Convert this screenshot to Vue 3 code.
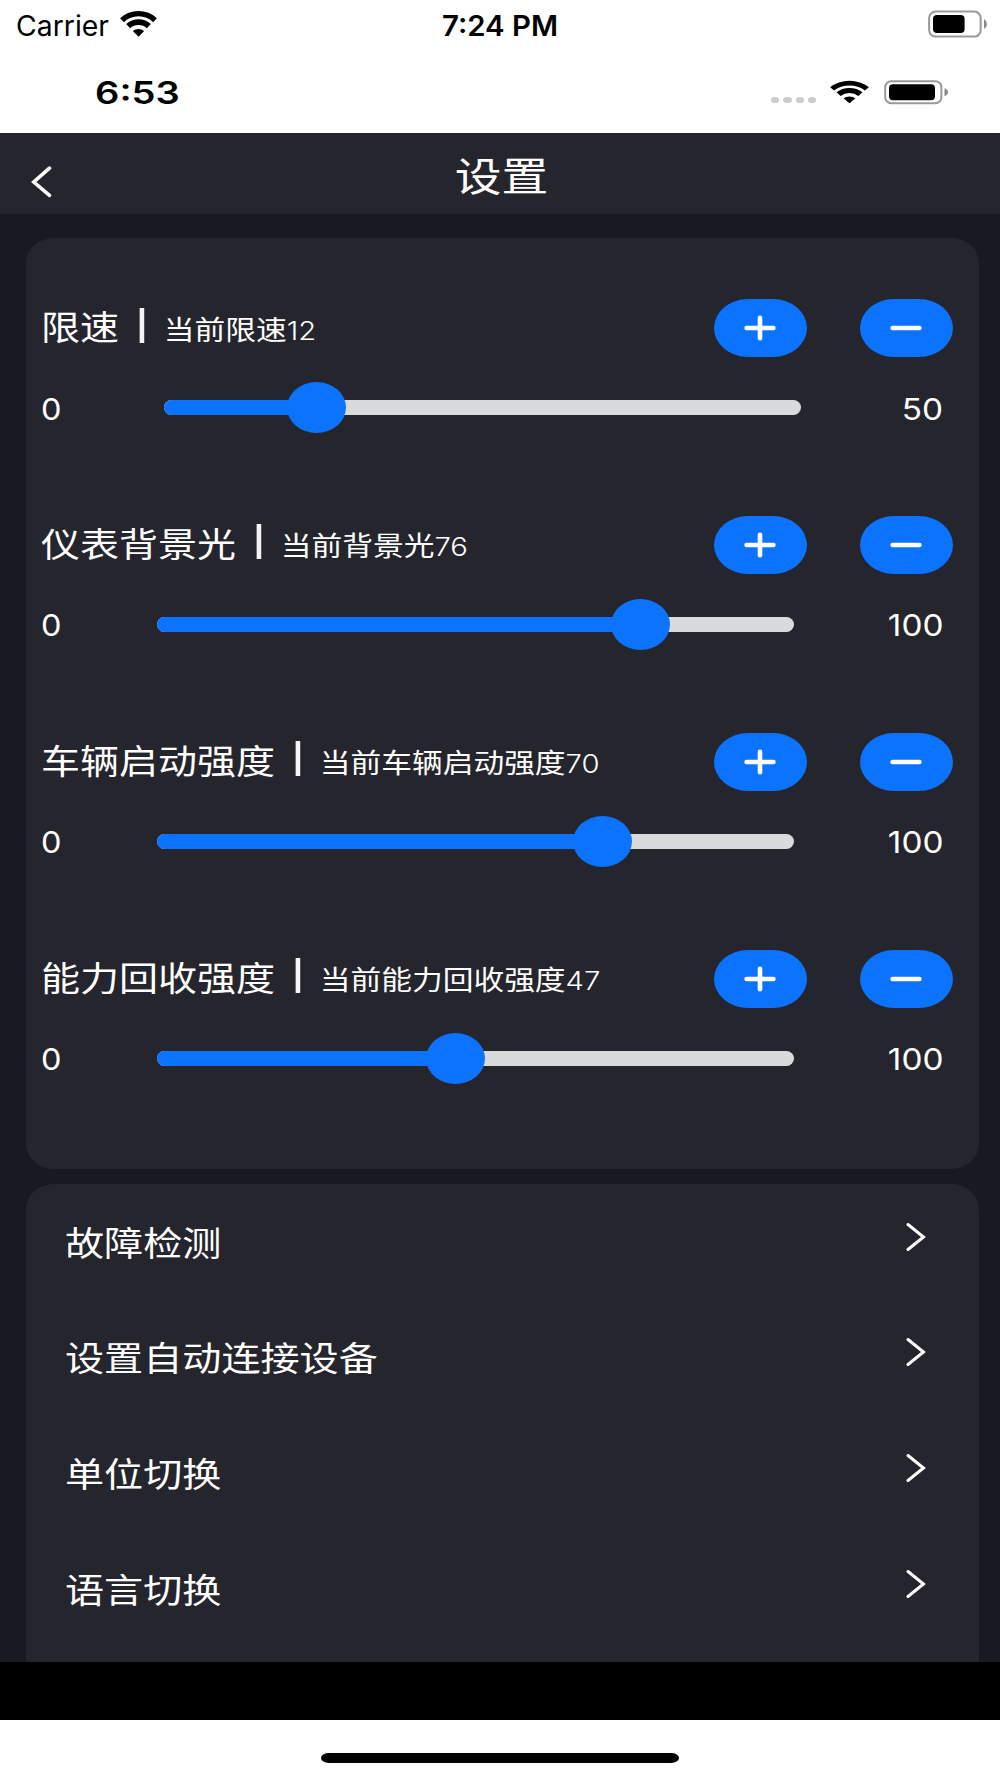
<script setup>
const sliders = [
  { label: '限速', current: '当前限速', value: 12, max: 50 },
  { label: '仪表背景光', current: '当前背景光', value: 76, max: 100 },
  { label: '车辆启动强度', current: '当前车辆启动强度', value: 70, max: 100 },
  { label: '能力回收强度', current: '当前能力回收强度', value: 47, max: 100 },
]
const links = ['故障检测', '设置自动连接设备', '单位切换', '语言切换']
const wifi =
  'M.1 8.3A26 26 0 0 1 36.4 8.3L32.65 12.2A20.5 20.5 0 0 0 3.85 12.2ZM6.1 14.1A17.5 17.5 0 0 1 30.4 14.1L26.5 18.3A12 12 0 0 0 10 18.3ZM12.7 21.1A8.2 8.2 0 0 1 23.8 21.1L18.25 26.8Z'
</script>

<template>
  <div class="screen">
    <div class="status device">
      <span class="carrier">Carrier</span>
      <svg class="wifi" viewBox="0 0 36.5 27" preserveAspectRatio="none"><path :d="wifi" /></svg>
      <span class="clock">7:24 PM</span>
      <svg class="battery" width="60" height="28" viewBox="0 0 60 28">
        <rect x="1.1" y="1.6" width="51.6" height="25" rx="6.5" fill="none" stroke="#999" stroke-width="2" />
        <rect x="5" y="5" width="31.6" height="18" rx="4" />
        <path d="M56 9Q59 11 59 14Q59 17 56 19Z" fill="#8a8a8a" />
      </svg>
    </div>
    <div class="status inner">
      <span class="time">6:53</span>
      <div class="dots"><i v-for="n in 4" :key="n"></i></div>
      <svg class="wifi wide" viewBox="0 0 36.5 27" preserveAspectRatio="none"><path :d="wifi" /></svg>
      <svg class="battery" width="65" height="25" viewBox="0 0 65 25">
        <rect x="1.2" y="1.2" width="56.2" height="22" rx="6" fill="none" stroke="#999" stroke-width="2" />
        <rect x="5" y="4.2" width="46" height="16" rx="4" />
        <path d="M60.5 8.3Q64 9.7 64 12.2Q64 14.7 60.5 16.1Z" fill="#8a8a8a" />
      </svg>
    </div>

    <header class="nav">
      <svg class="back" width="22" height="32" viewBox="0 0 22 32">
        <path d="M18.5 2.2L2.8 16L18.5 29.4" />
      </svg>
      <h1>设置</h1>
    </header>

    <main class="content">
      <section class="card controls">
        <div v-for="s in sliders" :key="s.label" class="control">
          <div class="head">
            <div class="caption">
              <span class="label">{{ s.label }}</span>
              <span class="bar"></span>
              <span class="current">{{ s.current }}<span class="num">{{ s.value }}</span></span>
            </div>
            <button class="pill">
              <svg width="32" height="26" viewBox="0 0 32 26">
                <path d="M2.6 13H29.4" /><path d="M16 2.7V23.3" />
              </svg>
            </button>
            <button class="pill">
              <svg width="32" height="26" viewBox="0 0 32 26"><path d="M2.6 13H29.4" /></svg>
            </button>
          </div>
          <div class="range" :class="{ short: s.max < 100 }">
            <span class="min">0</span>
            <div class="track">
              <div class="fill" :style="{ width: (s.value / s.max) * 100 + '%' }"></div>
              <div class="knob" :style="{ left: (s.value / s.max) * 100 + '%' }"></div>
            </div>
            <span class="max">{{ s.max }}</span>
          </div>
        </div>
      </section>

      <section class="card links">
        <div v-for="l in links" :key="l" class="link">
          <span class="text">{{ l }}</span>
          <svg class="chev" width="20" height="30" viewBox="0 0 20 30"><path d="M2 2.5L17.5 15L2 27.5" /></svg>
        </div>
      </section>
    </main>

    <div class="blackbar"></div>
    <footer class="home"><div class="indicator"></div></footer>
  </div>
</template>

<style>
body {
  margin: 0;
  background: #fff;
}
</style>

<style scoped>
.screen {
  width: 1000px;
  height: 1778px;
  display: flex;
  flex-direction: column;
  overflow: hidden;
  background: #fff;
  color: #fff;
  font-family: Inter, 'Noto Sans CJK SC', sans-serif;
}
.status {
  display: flex;
  color: #000;
  white-space: nowrap;
  box-sizing: border-box;
}
.status svg {
  flex: none;
  display: block;
}
.device {
  height: 50px;
  padding: 0 12px 0 16px;
}
.carrier,
.clock,
.time {
  flex: none;
  transform-origin: left center;
}
.carrier {
  width: 104px;
  font-size: 28.5px;
  line-height: 51px;
  transform: scaleX(0.995);
}
.wifi {
  width: 37px;
  height: 27px;
  margin-top: 10px;
}
.clock {
  margin-left: 284.5px;
  font-size: 28.5px;
  font-weight: 600;
  line-height: 51px;
  transform: scaleX(1.03);
}
.device .battery {
  margin: 10px 0 0 auto;
}
.inner {
  height: 83px;
  padding: 0 51px 0 95px;
}
.time {
  font-size: 31px;
  font-weight: 600;
  line-height: 85px;
  transform: scaleX(1.23);
}
.dots {
  display: flex;
  gap: 3.9px;
  margin: 46.5px 0 0 auto;
}
.dots i {
  width: 8.3px;
  height: 6.6px;
  border-radius: 50% / 45%;
  background: #ccc;
}
.wifi.wide {
  width: 39px;
  height: 23.5px;
  margin: 29.5px 15px 0 14px;
}
.inner .battery {
  margin-top: 29.5px;
}

.nav {
  height: 81px;
  flex: none;
  display: flex;
  align-items: center;
  justify-content: center;
  background: #25252d;
  position: relative;
}
.back {
  position: absolute;
  left: 31px;
  top: 32.5px;
}
.back path,
.chev path,
.pill path {
  fill: none;
  stroke: #fff;
  stroke-linecap: round;
}
.back path {
  stroke-width: 3.6;
}
h1 {
  margin: 0;
  font-size: 40px;
  font-weight: 400;
  line-height: 48px;
  transform: translate(1.5px, 3px) scaleX(1.17);
}

.content {
  height: 1448px;
  flex: none;
  box-sizing: border-box;
  padding: 24px 21px 0 26px;
  background: #191922;
  overflow: hidden;
}
.card {
  background: #25252d;
  border-radius: 28px / 25px;
  box-sizing: border-box;
}
.controls {
  height: 931px;
  padding: 61px 26.5px 0 15px;
}
.control {
  height: 216.9px;
}
.head {
  height: 58px;
  display: flex;
  align-items: center;
}
.caption {
  display: flex;
  align-items: center;
  flex: 1;
  white-space: nowrap;
  transform: scaleX(1.147);
  transform-origin: left center;
}
.label {
  font-size: 34px;
  line-height: 50px;
}
.bar {
  width: 4px;
  height: 35px;
  margin: 0 17px 6px 18px;
  background: #f4f4f5;
}
.current {
  font-size: 26.8px;
  line-height: 50px;
  position: relative;
  top: 2px;
}
.num {
  font-size: 25.5px;
  font-weight: 300;
}
.pill {
  flex: none;
  width: 93px;
  height: 58px;
  padding: 0;
  border: 0;
  border-radius: 34px / 29px;
  background: #0c73ff;
  display: flex;
  align-items: center;
  justify-content: center;
}
.pill + .pill {
  margin-left: 53px;
}
.pill path {
  stroke-width: 4.6;
}
.range {
  display: flex;
  align-items: center;
  height: 51px;
  margin-top: 25px;
  font-size: 29.5px;
}
.min,
.max {
  position: relative;
  top: 1px;
}
.min {
  width: 115.5px;
  transform: scaleX(1.1);
  transform-origin: left center;
}
.short .min {
  width: 123px;
}
.max {
  flex: 1;
  text-align: right;
  margin-right: 9.5px;
  transform: scaleX(1.13);
  transform-origin: right center;
}
.track {
  position: relative;
  flex: none;
  width: 637px;
  height: 15px;
  border-radius: 8px;
  background: #d9dadc;
}
.fill {
  height: 100%;
  border-radius: 8px;
  background: #0c73ff;
}
.knob {
  position: absolute;
  top: -18px;
  width: 59px;
  height: 51px;
  margin-left: -29.5px;
  border-radius: 50%;
  background: #0c73ff;
}
.links {
  margin-top: 15px;
  height: 520px;
  padding-left: 38.5px;
  padding-right: 53.5px;
}
.link {
  height: 115.8px;
  display: flex;
  align-items: flex-start;
  justify-content: space-between;
}
.text {
  margin-top: 34.5px;
  font-size: 34px;
  line-height: 50px;
  transform: scaleX(1.15);
  transform-origin: left center;
}
.chev {
  margin-top: 37.5px;
}
.chev path {
  stroke-width: 3;
}
.blackbar {
  height: 58px;
  flex: none;
  background: #000;
}
.home {
  flex: 1;
  display: flex;
  justify-content: center;
}
.indicator {
  width: 358px;
  height: 10px;
  margin-top: 33px;
  border-radius: 8px / 5px;
  background: #000;
}
</style>
